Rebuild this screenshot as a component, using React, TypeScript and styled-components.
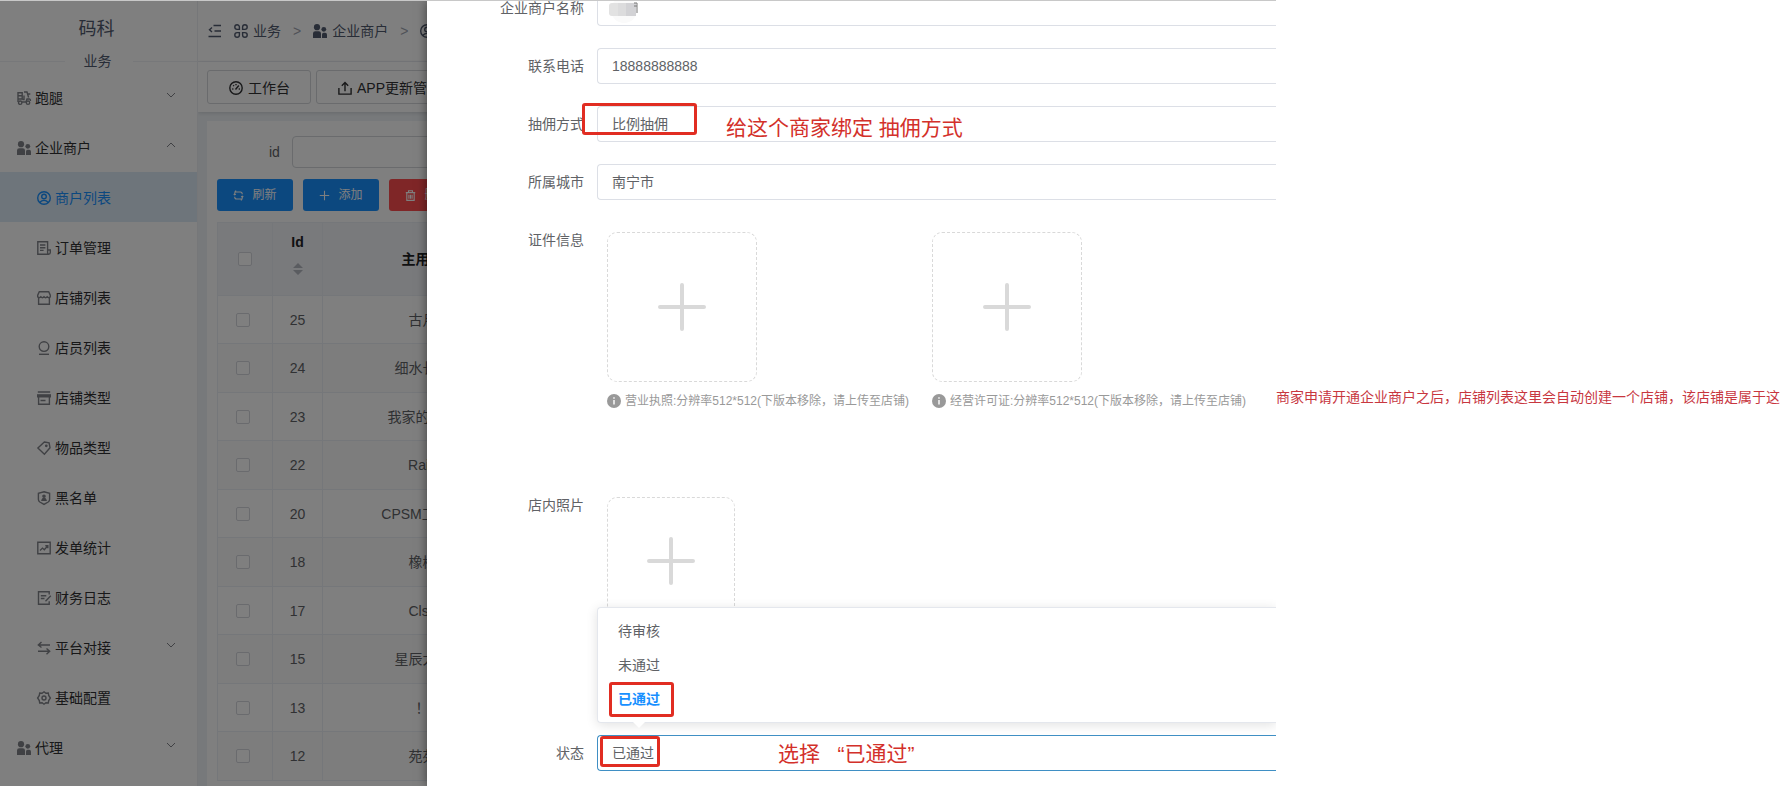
import React, { useState } from "react";
import styled, { createGlobalStyle } from "styled-components";

const GlobalStyle = createGlobalStyle`
  *, *::before, *::after { box-sizing: border-box; }
  body {
    margin: 0;
    background: #fff;
    color: #606266;
    font: 14px/20px "Liberation Sans", "Noto Sans CJK SC", sans-serif;
  }
  button, input, select { font: inherit; color: inherit; }
  ul { list-style: none; margin: 0; padding: 0; }
`;

/* ---------- icons ---------- */

const Svg = styled.svg<{ $size?: number }>`
  width: ${(p) => p.$size ?? 14}px;
  height: ${(p) => p.$size ?? 14}px;
  flex: none;
  display: block;
  overflow: visible;
  fill: none;
  stroke: currentColor;
  stroke-width: 1.4;
`;

const shapes: Record<string, React.ReactNode> = {
  errand: (
    <>
      <path d="M1 1.700h4.200v6.300H1zM1 4.800h4.200M7 1h3l1.600 5.500M7 4.500v4H5.500M13.300 3H10M1 8v3M5 11h4l1-3h2.500q1 0 1 2" />
      <circle cx="3.200" cy="11.700" r="1.700" />
      <circle cx="11" cy="11.700" r="1.700" />
    </>
  ),
  people: (
    <g fill="currentColor" stroke="none">
      <circle cx="4" cy="3.200" r="3.100" />
      <circle cx="10.800" cy="5.300" r="2.400" />
      <path d="M0 14V9.500Q0 7.300 2.200 7.300h3.600Q8 7.300 8 9.500V14zM9 14v-3.300Q9 8.800 10.600 8.800h1.600Q14 8.800 14 10.700V14z" />
    </g>
  ),
  account: (
    <>
      <circle cx="7" cy="7" r="6.300" />
      <circle cx="7" cy="5.500" r="2.300" />
      <path d="M2.800 11.500Q4.500 9.400 7 9.400t4.200 2.100" />
    </>
  ),
  bill: (
    <path d="M10.600 9V.8H.8v12.400h10.800q1.700 0 1.700-1.700V9h-2.700v2.800q0 1.400 1.200 1.400M3 4h5.400M3 6.700h5.400M3 9.400h3.600" />
  ),
  store: (
    <path d="M1.600 7v6.300h10.800V7M2.300.8h9.400l1.600 3.400v1.600q-1.400 1.800-3.100 0-1.600 1.800-3.200 0-1.600 1.800-3.200 0-1.700 1.800-3.100 0V4.200z" />
  ),
  clerk: (
    <>
      <circle cx="7" cy="5.600" r="4.800" />
      <path d="M2 13.300h10" />
    </>
  ),
  shop: (
    <>
      <path d="M.8 1h12.400M1.600 6v7.200h10.800V6M3.500 9.500h5" />
      <path d="M0 3.200h14v3.300H0z" fill="currentColor" stroke="none" />
    </>
  ),
  tag: (
    <>
      <path d="M7.300 1l4.800.9.900 4.800L7.400 13.200.9 7z" />
      <circle cx="9.300" cy="4.800" r="0.700" fill="currentColor" />
    </>
  ),
  shield: (
    <>
      <path d="M7 .8l5.600 1.400v6.300q0 1.600-1.400 2.500L7 13.400 2.800 11Q1.400 10.100 1.400 8.500V2.200z" />
      <circle cx="7" cy="5.200" r="1.100" fill="currentColor" />
      <path d="M5 9.200q.4-1.700 2-1.700t2 1.700z" fill="currentColor" />
    </>
  ),
  chart: <path d="M.8 1.300h12.400v11.400H.8zM3 9.500l2.500-2.400 1.800 1.600 3.200-3.600M8.300 4.800h2.500v2.400" />,
  draft: (
    <path d="M12.200 3.500V.8H1.500v12.400h10.700v-3M3.800 4.800h5.500M3.800 7.500h3.700M13.800 4.800L8.500 10.200" />
  ),
  swap: <path d="M13 4H1.500M4.500 1L1.300 4l3.200 2.500M1 10.300h11.500M9.500 7.500l3.200 2.800-3.200 3" />,
  gear: (
    <>
      <path d="M7 .8l1.900 1.400 2.400-.2.400 2.400L13.400 7l-1.700 2.600-.4 2.400-2.400-.2L7 13.200l-1.900-1.400-2.400.2-.4-2.400L.6 7l1.700-2.600.4-2.400 2.400.2z" />
      <circle cx="7" cy="7" r="2" />
    </>
  ),
  fold: <path d="M5.500 1.500H13M6.500 7H13M.5 12.500H13M4 3.500L1.500 5.700 4 8" />,
  command: (
    <path d="M5.400 5.400V3.100a2.300 2.300 0 1 0-2.300 2.300zM8.600 5.400h2.300a2.300 2.300 0 1 0-2.300-2.300zM5.400 8.600H3.100a2.300 2.300 0 1 0 2.300 2.300zM8.600 8.600v2.300a2.300 2.300 0 1 0 2.300-2.300z" />
  ),
  dashboard: (
    <>
      <circle cx="7" cy="7" r="6.200" />
      <path d="M6.500 8.500L9.800 4.500M3.200 8h1.200M9.700 8h1.200M7 3v1.200M4.200 4.300l.8.800" />
    </>
  ),
  upload: <path d="M.9 7v6.100h12.200V7M7 10.300V2M3.800 4.700L7 1.400l3.200 3.300" />,
  down: <path d="M1 3l4 4 4-4" strokeWidth="1" />,
  up: <path d="M1 7l4-4 4 4" strokeWidth="1" />,
  refresh: (
    <path d="M2.200 5.500V3.900Q2.200 2.500 3.600 2.500h5.800q2.400 0 2.400 3M4 .8L2.200 2.500M11.800 8.500v1.600q0 1.400-1.400 1.400H4.600q-2.400 0-2.400-3M10 13.200l1.800-1.700M.8 5.200l1.400 1 1.500-1M13.200 8.800l-1.400-1-1.500 1" />
  ),
  plus: <path d="M7 1v12M1 7h12" />,
  trash: <path d="M1 3.300h12M4.500 3V1h5v2M2.300 3.500v9.700h9.400V3.500M5 6v5M7 6v5M9 6v5" />,
};

const Icon = ({ name, size }: { name: string; size?: number }) => (
  <Svg
    $size={size}
    viewBox={name === "down" || name === "up" ? "0 0 10 10" : "0 0 14 14"}
    aria-hidden="true"
  >
    {shapes[name]}
  </Svg>
);

/* ---------- page frame ---------- */

const Page = styled.main`
  display: flex;
  height: 100vh;
  overflow: hidden;
`;

const Screen = styled.section`
  position: relative;
  display: flex;
  flex: 1;
  min-width: 0;
  overflow: hidden;
  border-top: 1px solid #c8c8c8;
`;

const Mask = styled.div`
  position: absolute;
  inset: 0;
  background: rgba(0, 0, 0, 0.5);
`;

const SideNote = styled.p`
  align-self: center;
  flex: none;
  margin: 0;
  padding: 8px 3px 0 0;
  color: #c8373f;
  white-space: nowrap;
`;

/* ---------- sidebar ---------- */

const Sidebar = styled.nav`
  flex: none;
  width: 197px;
`;

const Brand = styled.div`
  height: 60px;
  padding: 15px 4px 0 0;
  text-align: center;
  font-size: 18px;
  line-height: 26px;
  color: #515a6e;
`;

const GroupTitle = styled.div`
  display: flex;
  align-items: center;
  justify-content: center;
  height: 12px;
  line-height: 1px;
  margin: -6px 0 5px;
  color: #515a6e;

  span { width: 68px; padding-right: 2px; text-align: center; }
  &::before, &::after { content: ""; flex: 1; height: 1px; background: #eef0f4; }
`;

const MenuLink = styled.a<{ $child?: boolean; $active?: boolean }>`
  display: flex;
  align-items: center;
  gap: 4px;
  height: 50px;
  padding: 2px 21px 0 ${(p) => (p.$child ? 37 : 17)}px;
  text-decoration: none;
  color: #303133;
  background: ${(p) => (p.$active ? "#dcebf7" : "transparent")};

  > svg { color: #808389; }
  > svg:last-child { margin: 0 0 6px auto; }
  ${(p) => p.$active && `&, > svg { color: #1890ff; }`}
`;

const menu: { icon: string; text: string; child?: boolean; active?: boolean; fold?: string }[] = [
  { icon: "errand", text: "跑腿", fold: "down" },
  { icon: "people", text: "企业商户", fold: "up" },
  { icon: "account", text: "商户列表", child: true, active: true },
  { icon: "bill", text: "订单管理", child: true },
  { icon: "store", text: "店铺列表", child: true },
  { icon: "clerk", text: "店员列表", child: true },
  { icon: "shop", text: "店铺类型", child: true },
  { icon: "tag", text: "物品类型", child: true },
  { icon: "shield", text: "黑名单", child: true },
  { icon: "chart", text: "发单统计", child: true },
  { icon: "draft", text: "财务日志", child: true },
  { icon: "swap", text: "平台对接", child: true, fold: "down" },
  { icon: "gear", text: "基础配置", child: true },
  { icon: "people", text: "代理", fold: "down" },
];

/* ---------- content behind the drawer ---------- */

const Content = styled.div`
  flex: 1;
  min-width: 0;
  overflow: hidden;
  border-left: 1px solid #eceef2;
  background: #eff3f6;
`;

const TopBar = styled.header`
  display: flex;
  align-items: center;
  gap: 12px;
  height: 61px;
  padding-left: 10px;
  white-space: nowrap;
  color: #515a6e;
  background: #fff;
  border-bottom: 1px solid #eef0f4;
`;

const Crumb = styled.a`
  display: flex;
  align-items: center;
  gap: 5px;
  color: #515a6e;
  text-decoration: none;
`;

const Separator = styled.span`
  color: #a0a5b0;
`;

const TabBar = styled.div`
  display: flex;
  gap: 5px;
  height: 50px;
  padding: 8px 9px;
  background: #fff;
  box-shadow: 0 1px 4px rgba(0, 21, 41, 0.15);
`;

const Tab = styled.button`
  display: flex;
  flex: none;
  align-items: center;
  gap: 5px;
  height: 34px;
  padding: 2px 20px 0 21px;
  white-space: nowrap;
  color: #303133;
  background: #fff;
  border: 1px solid #d4d6da;
  border-radius: 3px;
`;

const Card = styled.section`
  height: 100%;
  margin: 9px 0 0 9px;
  padding: 15px 10px;
  background: #fff;
`;

const Search = styled.label`
  display: flex;
  align-items: center;
  justify-content: flex-end;
  gap: 12px;
  padding-left: 52px;

  input {
    flex: 1;
    height: 32px;
    border: 1px solid #d4d6da;
    border-radius: 4px;
    background: #fff;
  }
`;

const Actions = styled.div`
  display: flex;
  gap: 10px;
  padding: 11px 0;
`;

const Action = styled.button<{ $danger?: boolean }>`
  display: flex;
  flex: none;
  align-items: center;
  justify-content: center;
  gap: 8px;
  width: 76px;
  height: 32px;
  padding: 0;
  border: 0;
  border-radius: 3px;
  font-size: 12px;
  color: #fff;
  background: ${(p) => (p.$danger ? "#ff4d4f" : "#1890ff")};
`;

const Table = styled.table`
  width: 960px;
  table-layout: fixed;
  border-collapse: collapse;
  border: 1px solid #ebeef5;
  text-align: center;

  th, td { padding: 0; border: 1px solid #ebeef5; }
  th { height: 73px; color: #1f2225; background: #f3f5f9; }
  td { height: 49px; }
  td:first-child { padding-right: 4px; }
  tbody tr:nth-child(odd) td { height: 48px; }
  tbody tr:nth-child(even) td { background: #fafafa; }
`;

const Tick = styled.input`
  appearance: none;
  display: block;
  width: 14px;
  height: 14px;
  margin: 0 auto;
  border: 1px solid #d4d6dc;
  border-radius: 2px;
  background: #fff;
`;

const SortMark = styled.svg`
  display: block;
  width: 10px;
  height: 12px;
  margin: 11px auto 12px;
  fill: #b4b8c0;
`;

const merchants: [number, string][] = [
  [25, "古月"],
  [24, "细水长流"],
  [23, "我家的小店"],
  [22, "Rain"],
  [20, "CPSM工作室"],
  [18, "橡树"],
  [17, "Clsa"],
  [15, "星辰大海"],
  [13, "！"],
  [12, "苑苑"],
];

/* ---------- drawer form ---------- */

const Drawer = styled.aside`
  position: absolute;
  inset: 0 0 0 427px;
  overflow: hidden;
  background: #fff;
  box-shadow: 0 0 10px rgba(0, 0, 0, 0.5);
`;

const Form = styled.form`
  margin-top: -11px;
`;

const Row = styled.div<{ $space?: number }>`
  display: grid;
  grid-template-columns: 157px 1fr;
  column-gap: 13px;
  margin-bottom: ${(p) => p.$space ?? 22}px;
`;

const Label = styled.label`
  text-align: right;
  line-height: 36px;
`;

const Field = styled.div`
  position: relative;
  min-width: 0;
`;

const fieldLook = `
  appearance: none;
  display: block;
  width: 100%;
  height: 36px;
  padding: 0 14px;
  border: 1px solid #dcdfe6;
  border-right: 0;
  border-radius: 4px 0 0 4px;
  outline: 0;
  background: #fff;
`;

const TextInput = styled.input`${fieldLook}`;

const Select = styled.select<{ $open?: boolean }>`
  ${fieldLook}
  ${(p) => p.$open && "border-color: #3f8fc4;"}
`;

const Redaction = styled.svg`
  position: absolute;
  left: 11px;
  top: 0;
  width: 32px;
  height: 36px;
`;

const Uploads = styled.div`
  display: grid;
  grid-template-columns: 325px 325px;
  padding: 10px 0 0 10px;
`;

const UploadBox = styled.button<{ $size: number }>`
  display: grid;
  place-items: center;
  width: ${(p) => p.$size}px;
  height: ${(p) => p.$size}px;
  padding: 0;
  border: 1px dashed #d9d9d9;
  border-radius: 10px;
  background: #fff;

  svg { width: 50px; height: 50px; stroke: #d9d9d9; stroke-width: 4; stroke-linecap: round; }
`;

const Hint = styled.p`
  display: flex;
  align-items: center;
  gap: 4px;
  margin: 9px 0 0;
  white-space: nowrap;
  font-size: 12px;
  color: #999;

  svg { width: 14px; height: 14px; }
`;

const Dropdown = styled.ul`
  position: absolute;
  left: 0;
  right: 0;
  bottom: 48px;
  padding: 6px 0;
  border: 1px solid #e4e7ed;
  border-right: 0;
  border-radius: 4px 0 0 4px;
  background: #fff;
  box-shadow: 0 2px 12px rgba(0, 0, 0, 0.12);

  &::after {
    content: "";
    position: absolute;
    left: 35px;
    top: 100%;
    border: 6px solid transparent;
    border-top-color: #fff;
    border-bottom: 0;
  }
`;

const Option = styled.li<{ $selected?: boolean }>`
  height: 34px;
  padding: 0 20px;
  line-height: 34px;
  ${(p) => p.$selected && "color: #1890ff; font-weight: 700;"}
`;

/* ---------- red remarks laid over the form ---------- */

const Frame = styled.span<{ $x: number; $y: number; $w: number; $h: number }>`
  position: absolute;
  left: ${(p) => p.$x}px;
  top: ${(p) => p.$y}px;
  width: ${(p) => p.$w}px;
  height: ${(p) => p.$h}px;
  border: 3px solid #e12d22;
  border-radius: 3px;
  pointer-events: none;
`;

const Remark = styled.span<{ $x: number; $y: number }>`
  position: absolute;
  left: ${(p) => p.$x}px;
  top: ${(p) => p.$y}px;
  font-size: 21px;
  line-height: 30px;
  white-space: pre;
  color: #d3302a;
  pointer-events: none;
`;

const Upload = ({ size, label }: { size: number; label: string }) => (
  <UploadBox type="button" $size={size} aria-label={label}>
    <svg viewBox="0 0 50 50" aria-hidden="true">
      <path d="M25 3v44M3 25h44" />
    </svg>
  </UploadBox>
);

const UploadHint = ({ children }: { children: React.ReactNode }) => (
  <Hint>
    <svg viewBox="0 0 14 14" aria-hidden="true">
      <circle cx="7" cy="7" r="7" fill="#999" />
      <path d="M7 6v4.500M7 3.300v1.400" stroke="#fff" strokeWidth="1.400" />
    </svg>
    {children}
  </Hint>
);

const states = ["待审核", "未通过", "已通过"];

export default function App() {
  const [phone, setPhone] = useState("18888888888");
  const [state, setState] = useState("已通过");

  return (
    <>
      <GlobalStyle />
      <Page>
        <Screen>
          <Sidebar>
            <Brand>码科</Brand>
            <GroupTitle><span>业务</span></GroupTitle>
            <ul>
              {menu.map((m) => (
                <li key={m.text}>
                  <MenuLink href="#" $child={m.child} $active={m.active}>
                    <Icon name={m.icon} />
                    <span>{m.text}</span>
                    {m.fold && <Icon name={m.fold} size={10} />}
                  </MenuLink>
                </li>
              ))}
            </ul>
          </Sidebar>

          <Content>
            <TopBar>
              <Icon name="fold" />
              <Crumb href="#"><Icon name="command" />业务</Crumb>
              <Separator>&gt;</Separator>
              <Crumb href="#"><Icon name="people" />企业商户</Crumb>
              <Separator>&gt;</Separator>
              <Crumb href="#"><Icon name="account" />商户列表</Crumb>
            </TopBar>
            <TabBar>
              <Tab type="button"><Icon name="dashboard" />工作台</Tab>
              <Tab type="button"><Icon name="upload" />APP更新管理</Tab>
            </TabBar>
            <Card>
              <Search>id<input type="text" /></Search>
              <Actions>
                <Action type="button"><Icon name="refresh" size={11} />刷新</Action>
                <Action type="button"><Icon name="plus" size={11} />添加</Action>
                <Action type="button" $danger><Icon name="trash" size={11} />删除</Action>
              </Actions>
              <Table>
                <colgroup>
                  <col style={{ width: 55 }} />
                  <col style={{ width: 50 }} />
                  <col style={{ width: 200 }} />
                  <col />
                </colgroup>
                <thead>
                  <tr>
                    <th><Tick type="checkbox" aria-label="全选" /></th>
                    <th>
                      Id
                      <SortMark viewBox="0 0 10 12" aria-hidden="true">
                        <path d="M5 0l5 5H0zM5 12l5-5H0z" />
                      </SortMark>
                    </th>
                    <th>主用户</th>
                    <th />
                  </tr>
                </thead>
                <tbody>
                  {merchants.map(([id, name]) => (
                    <tr key={id}>
                      <td><Tick type="checkbox" aria-label={`选择 ${id}`} /></td>
                      <td>{id}</td>
                      <td>{name}</td>
                      <td />
                    </tr>
                  ))}
                </tbody>
              </Table>
            </Card>
          </Content>

          <Mask />

          <Drawer>
            <Form>
              <Row>
                <Label htmlFor="name">企业商户名称</Label>
                <Field>
                  <TextInput id="name" type="text" />
                  <Redaction viewBox="0 0 32 36" aria-hidden="true">
                    <circle cx="16" cy="20" r="13" fill="#fafafa" />
                    <rect x="1" y="13" width="12" height="13" rx="3" fill="#e2e2e2" />
                    <rect x="10" y="13" width="10" height="13" fill="#dcdcdd" />
                    <rect x="18" y="13" width="10" height="13" fill="#d2d2d5" />
                    <path d="M26 13h3v10M26 16h3" fill="none" stroke="#777" />
                  </Redaction>
                </Field>
              </Row>
              <Row>
                <Label htmlFor="phone">联系电话</Label>
                <Field>
                  <TextInput id="phone" type="text" value={phone} onChange={(e) => setPhone(e.target.value)} />
                </Field>
              </Row>
              <Row>
                <Label htmlFor="commission">抽佣方式</Label>
                <Field>
                  <Select id="commission"><option>比例抽佣</option></Select>
                  <Frame $x={-15} $y={-3} $w={115} $h={32} />
                  <Remark $x={129} $y={7}>给这个商家绑定 抽佣方式</Remark>
                </Field>
              </Row>
              <Row>
                <Label htmlFor="city">所属城市</Label>
                <Field>
                  <Select id="city"><option>南宁市</option></Select>
                </Field>
              </Row>
              <Row $space={76}>
                <Label as="span">证件信息</Label>
                <Uploads>
                  <div>
                    <Upload size={150} label="上传营业执照" />
                    <UploadHint>营业执照:分辨率512*512(下版本移除，请上传至店铺)</UploadHint>
                  </div>
                  <div>
                    <Upload size={150} label="上传经营许可证" />
                    <UploadHint>经营许可证:分辨率512*512(下版本移除，请上传至店铺)</UploadHint>
                  </div>
                </Uploads>
              </Row>
              <Row $space={110}>
                <Label as="span">店内照片</Label>
                <Uploads>
                  <Upload size={128} label="上传店内照片" />
                </Uploads>
              </Row>
              <Row>
                <Label htmlFor="state">状态</Label>
                <Field>
                  <Select id="state" $open value={state} onChange={(e) => setState(e.target.value)}>
                    {states.map((s) => <option key={s}>{s}</option>)}
                  </Select>
                  <Dropdown role="listbox" aria-label="状态">
                    {states.map((s) => (
                      <Option key={s} role="option" aria-selected={s === state} $selected={s === state} onClick={() => setState(s)}>
                        {s}
                      </Option>
                    ))}
                  </Dropdown>
                  <Frame $x={12} $y={-53} $w={65} $h={35} />
                  <Frame $x={3} $y={1} $w={60} $h={31} />
                  <Remark $x={181} $y={4}>选择   “已通过”</Remark>
                </Field>
              </Row>
            </Form>
          </Drawer>
        </Screen>
        <SideNote>商家申请开通企业商户之后，店铺列表这里会自动创建一个店铺，该店铺是属于这</SideNote>
      </Page>
    </>
  );
}
